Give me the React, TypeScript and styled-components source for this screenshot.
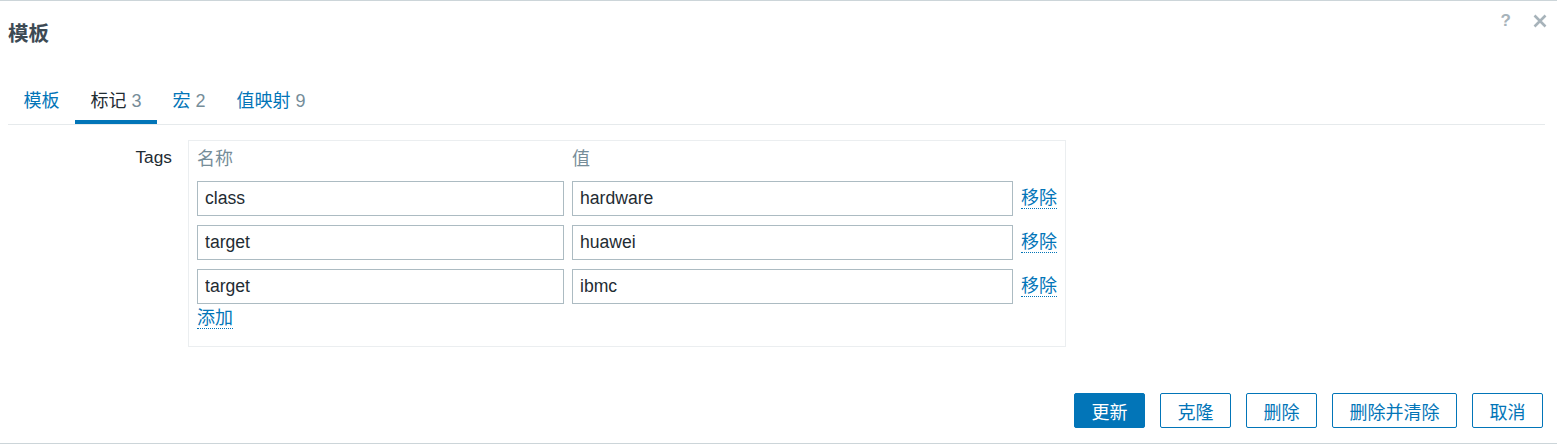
import styled, { createGlobalStyle } from "styled-components";

const GlobalStyle = createGlobalStyle`
  body {
    margin: 0;
    background: #fff;
    font-family: "Liberation Sans", "Noto Sans CJK SC", sans-serif;
    color: #1f2c33;
  }
`;

const tabs = [
  { name: "模板" },
  { name: "标记", count: 3, active: true },
  { name: "宏", count: 2 },
  { name: "值映射", count: 9 },
];

const tags = [
  { name: "class", value: "hardware" },
  { name: "target", value: "huawei" },
  { name: "target", value: "ibmc" },
];

const buttons = [
  { label: "更新", primary: true },
  { label: "克隆" },
  { label: "删除" },
  { label: "删除并清除" },
  { label: "取消" },
];

const App = () => {
  return (
    <>
      <GlobalStyle />
      <Dialog>
        <Header>
          <Title>模板</Title>
          <HeaderActions>
            <HelpIcon>?</HelpIcon>
            <CloseIcon viewBox="0 0 14 14">
              <path d="M1.5 1.5 L12.5 12.5 M12.5 1.5 L1.5 12.5" />
            </CloseIcon>
          </HeaderActions>
        </Header>

        <TabList>
          {tabs.map(({ name, count, active }) => (
            <Tab key={name} $active={!!active}>
              {name}
              {count !== undefined && <Count> {count}</Count>}
            </Tab>
          ))}
        </TabList>

        <FormRow>
          <Label>Tags</Label>
          <TagTable>
            <HeadCell>名称</HeadCell>
            <HeadCell>值</HeadCell>
            <span />
            {tags.map((tag, i) => (
              <Row key={i}>
                <Input defaultValue={tag.name} />
                <Input defaultValue={tag.value} />
                <ActionLink>移除</ActionLink>
              </Row>
            ))}
            <AddRow>
              <ActionLink>添加</ActionLink>
            </AddRow>
          </TagTable>
        </FormRow>

        <Footer>
          {buttons.map(({ label, primary }) => (
            <Button key={label} $primary={!!primary}>
              {label}
            </Button>
          ))}
        </Footer>
      </Dialog>
    </>
  );
};

const Dialog = styled.div`
  border-top: 1px solid #ccd5d9;
  border-bottom: 1px solid #ccd5d9;
  padding: 0 12px 0 8px;
`;

const Header = styled.div`
  display: flex;
  justify-content: space-between;
  align-items: flex-start;
`;

const Title = styled.h4`
  margin: 19px 0 0;
  font-size: 20.5px;
  line-height: 28px;
  font-weight: bold;
  color: #3d4a54;
`;

const HeaderActions = styled.div`
  display: flex;
  align-items: center;
  gap: 22px;
  margin-top: 12px;
`;

const HelpIcon = styled.span`
  font-size: 17px;
  line-height: 16px;
  font-weight: bold;
  color: #a7b3ba;
`;

const CloseIcon = styled.svg`
  width: 14px;
  height: 14px;
  margin-right: -2px;

  & path {
    stroke: #a7b3ba;
    stroke-width: 2.6;
    fill: none;
  }
`;

const TabList = styled.nav`
  display: flex;
  margin-top: 33px;
  border-bottom: 1px solid #e6eaec;
`;

const Tab = styled.div<{ $active: boolean }>`
  padding: 10px 15.5px 9px;
  font-size: 18px;
  line-height: 20px;
  color: ${({ $active }) => ($active ? "#1f2c33" : "#0275b8")};
  border-bottom: 4px solid ${({ $active }) => ($active ? "#0275b8" : "transparent")};
  white-space: pre;
`;

const Count = styled.span`
  color: #768d99;
`;

const FormRow = styled.div`
  display: grid;
  grid-template-columns: 164px auto;
  column-gap: 16px;
  align-items: start;
  margin-top: 15px;
`;

const Label = styled.div`
  padding-top: 7px;
  text-align: right;
  font-size: 17.3px;
  line-height: 20px;
  color: #1f2c33;
`;

const TagTable = styled.div`
  display: grid;
  grid-template-columns: 367px 441px auto;
  column-gap: 8px;
  row-gap: 9px;
  width: fit-content;
  padding: 5px 8px 17px;
  border: 1px solid #ebeef0;
`;

const HeadCell = styled.div`
  font-size: 18px;
  line-height: 26px;
  color: #768d99;
`;

const Row = styled.div`
  display: contents;
`;

const Input = styled.input`
  box-sizing: border-box;
  height: 35px;
  width: 100%;
  margin: 0;
  padding: 0 7px;
  border: 1px solid #acbbc2;
  border-radius: 0;
  font-family: inherit;
  font-size: 17.6px;
  color: #1f2c33;
  background: #fff;
  outline: none;
`;

const ActionLink = styled.a`
  align-self: center;
  justify-self: start;
  font-size: 18px;
  line-height: 19px;
  color: #0275b8;
  border-bottom: 1px dotted #0275b8;
  cursor: pointer;
`;

const AddRow = styled.div`
  grid-column: 1 / -1;
  display: flex;
  margin-top: -4px;
`;

const Footer = styled.div`
  display: flex;
  justify-content: flex-end;
  gap: 15px;
  margin-top: 46px;
  padding: 0 2px 15px 0;
`;

const Button = styled.button<{ $primary: boolean }>`
  box-sizing: border-box;
  height: 35px;
  min-width: 70px;
  padding: 0 16.5px;
  border: 1px solid #0275b8;
  border-radius: 2px;
  font-family: inherit;
  font-size: 18px;
  color: ${({ $primary }) => ($primary ? "#fff" : "#0275b8")};
  background: ${({ $primary }) => ($primary ? "#0275b8" : "#fff")};
  cursor: pointer;
`;

export default App;
